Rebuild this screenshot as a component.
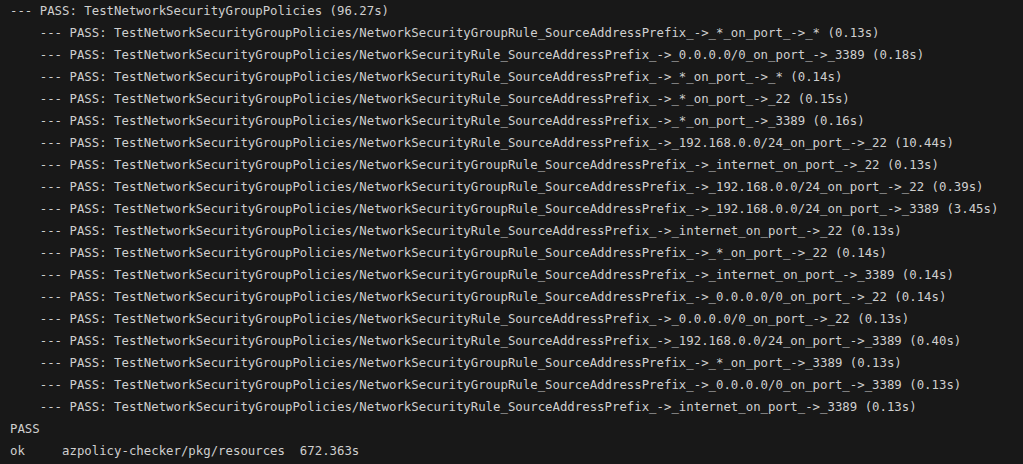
import React from "react";

const pkg = "TestNetworkSecurityGroupPolicies";

const subtests: [string, string][] = [
    ["NetworkSecurityGroupRule_SourceAddressPrefix_->_*_on_port_->_*", "0.13s"],
    ["NetworkSecurityRule_SourceAddressPrefix_->_0.0.0.0/0_on_port_->_3389", "0.18s"],
    ["NetworkSecurityRule_SourceAddressPrefix_->_*_on_port_->_*", "0.14s"],
    ["NetworkSecurityRule_SourceAddressPrefix_->_*_on_port_->_22", "0.15s"],
    ["NetworkSecurityRule_SourceAddressPrefix_->_*_on_port_->_3389", "0.16s"],
    ["NetworkSecurityRule_SourceAddressPrefix_->_192.168.0.0/24_on_port_->_22", "10.44s"],
    ["NetworkSecurityGroupRule_SourceAddressPrefix_->_internet_on_port_->_22", "0.13s"],
    ["NetworkSecurityGroupRule_SourceAddressPrefix_->_192.168.0.0/24_on_port_->_22", "0.39s"],
    ["NetworkSecurityGroupRule_SourceAddressPrefix_->_192.168.0.0/24_on_port_->_3389", "3.45s"],
    ["NetworkSecurityRule_SourceAddressPrefix_->_internet_on_port_->_22", "0.13s"],
    ["NetworkSecurityGroupRule_SourceAddressPrefix_->_*_on_port_->_22", "0.14s"],
    ["NetworkSecurityGroupRule_SourceAddressPrefix_->_internet_on_port_->_3389", "0.14s"],
    ["NetworkSecurityGroupRule_SourceAddressPrefix_->_0.0.0.0/0_on_port_->_22", "0.14s"],
    ["NetworkSecurityRule_SourceAddressPrefix_->_0.0.0.0/0_on_port_->_22", "0.13s"],
    ["NetworkSecurityRule_SourceAddressPrefix_->_192.168.0.0/24_on_port_->_3389", "0.40s"],
    ["NetworkSecurityGroupRule_SourceAddressPrefix_->_*_on_port_->_3389", "0.13s"],
    ["NetworkSecurityGroupRule_SourceAddressPrefix_->_0.0.0.0/0_on_port_->_3389", "0.13s"],
    ["NetworkSecurityRule_SourceAddressPrefix_->_internet_on_port_->_3389", "0.13s"],
];

export default function App() {
    const lines = [
        `--- PASS: ${pkg} (96.27s)`,
        ...subtests.map(([name, t]) => `    --- PASS: ${pkg}/${name} (${t})`),
        "PASS",
        "ok     azpolicy-checker/pkg/resources  672.363s",
    ];

    return (
        <div className="w-[1023px] h-[464px] overflow-hidden bg-[#181818] text-[#cfcfcf] pl-[10px] font-['DejaVu_Sans_Mono',monospace] text-[12.35px] leading-[22px]">
            {lines.map((l, i) => (
                <div key={i} className="whitespace-pre">{l}</div>
            ))}
        </div>
    );
}
